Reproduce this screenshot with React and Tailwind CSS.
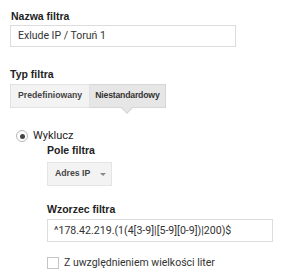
import React from "react";

const Label = ({ children, className = "" }) => (
  <div
    className={`text-[10.5px] font-bold text-[#222] leading-[14px] ${className}`}
    style={{ fontFamily: "'Liberation Sans', Arial, sans-serif" }}
  >
    {children}
  </div>
);

export default function App() {
  return (
    <div
      className="w-[300px] h-[280px] bg-white overflow-hidden pl-[10px] pt-[9px] text-[#222]"
      style={{ fontFamily: "Roboto, 'Liberation Sans', sans-serif" }}
    >
      <Label className="pl-[1px]">Nazwa filtra</Label>
      <div className="mt-[2px] w-[226px] h-[22px] border border-[#dcdcdc] flex items-center pl-[7px] text-[10.5px] text-[#333]">
        Exlude IP / Toruń 1
      </div>

      <Label className="mt-[20px]">Typ filtra</Label>
      {/* filter type toggle */}
      <div className="mt-[3px] flex h-[24px] text-[8.7px] font-bold">
        <button
          className="px-[7px] h-full bg-[#f3f3f3] border border-[#e2e2e2] text-[#444]"
          style={{ fontFamily: "'Liberation Sans', Arial, sans-serif" }}
        >
          Predefiniowany
        </button>
        <button
          className="relative px-[5px] h-full bg-[#e6e6e6] border border-l-0 border-[#d6d6d6] text-[#333] tracking-[-0.2px]"
          style={{ fontFamily: "'Liberation Sans', Arial, sans-serif" }}
        >
          Niestandardowy
          <span className="absolute left-1/2 -bottom-[5px] -translate-x-1/2 w-[8px] h-[8px] rotate-45 bg-[#e6e6e6] border-r border-b border-[#d6d6d6] -mt-[4px]" />
        </button>
      </div>

      {/* radio */}
      <div className="mt-[22px] ml-[6px] flex items-center gap-[5px] leading-[12px]">
        <span className="w-[12px] h-[12px] rounded-full border border-[#b8b8b8] flex items-center justify-center">
          <span className="w-[5px] h-[5px] rounded-full bg-[#444]" />
        </span>
        <span className="text-[11px] text-[#222]">Wyklucz</span>
      </div>

      <div className="pl-[37px]">
        <Label className="mt-[1px]">Pole filtra</Label>
        <div className="mt-[5px] w-[65px] h-[24px] bg-[#f3f3f3] border border-[#e4e4e4] flex items-center pl-[7px] text-[8.7px] font-bold text-[#444]">
          <span style={{ fontFamily: "'Liberation Sans', Arial, sans-serif" }}>Adres IP</span>
          <span className="ml-[10px] w-0 h-0 border-l-[3px] border-r-[3px] border-t-[3px] border-l-transparent border-r-transparent border-t-[#888]" />
        </div>

        <Label className="mt-[16px]">Wzorzec filtra</Label>
        <div className="mt-[3px] w-[226px] h-[23px] border border-[#dcdcdc] flex items-center pl-[6px] text-[10.6px] text-[#333]">
          ^178.42.219.(1(4[3-9]|[5-9][0-9])|200)$
        </div>

        <div className="mt-[13px] flex items-center gap-[5px]">
          <span className="w-[12px] h-[12px] border border-[#c4c4c4] bg-white" />
          <span className="text-[10.5px] text-[#333]">Z uwzględnieniem wielkości liter</span>
        </div>
      </div>
    </div>
  );
}
